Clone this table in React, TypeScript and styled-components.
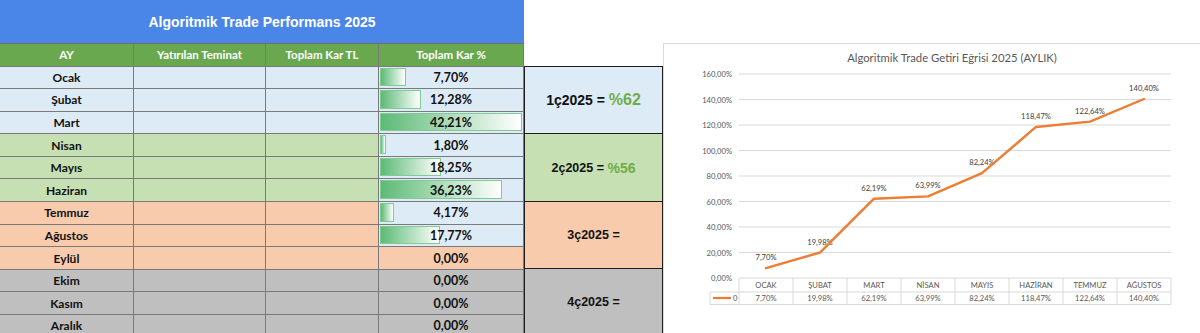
import styled, { createGlobalStyle } from "styled-components";

const GlobalStyle = createGlobalStyle`
  html, body {
    margin: 0;
    padding: 0;
    background: #ffffff;
  }
  body {
    font-family: "Liberation Sans", Arial, sans-serif;
    overflow: hidden;
  }
`;

const ROW_BG = ["#ddebf7", "#c6e0b4", "#f8cbad", "#bfbfbf"];
const BAR_MAX = 42.21;
const BAR_FULL = 142;

const MONTHS = [
  { name: "Ocak", pct: 7.7, q: 0 },
  { name: "Şubat", pct: 12.28, q: 0 },
  { name: "Mart", pct: 42.21, q: 0 },
  { name: "Nisan", pct: 1.8, q: 1 },
  { name: "Mayıs", pct: 18.25, q: 1 },
  { name: "Haziran", pct: 36.23, q: 1 },
  { name: "Temmuz", pct: 4.17, q: 2 },
  { name: "Ağustos", pct: 17.77, q: 2 },
  { name: "Eylül", pct: 0, q: 2 },
  { name: "Ekim", pct: 0, q: 3 },
  { name: "Kasım", pct: 0, q: 3 },
  { name: "Aralık", pct: 0, q: 3 },
];

const QUARTERS = [
  { label: "1ç2025 = ", value: "%62", size: 14, valueSize: 16 },
  { label: "2ç2025 = ", value: "%56", size: 12.5, valueSize: 14 },
  { label: "3ç2025 =", value: "", size: 12.5, valueSize: 14 },
  { label: "4ç2025 =", value: "", size: 12.5, valueSize: 14 },
];

const CHART = [
  { cat: "OCAK", v: 7.7 },
  { cat: "ŞUBAT", v: 19.98 },
  { cat: "MART", v: 62.19 },
  { cat: "NİSAN", v: 63.99 },
  { cat: "MAYIS", v: 82.24 },
  { cat: "HAZİRAN", v: 118.47 },
  { cat: "TEMMUZ", v: 122.64 },
  { cat: "AĞUSTOS", v: 140.4 },
];

const fmt = (n: number) => n.toFixed(2).replace(".", ",") + "%";

const Page = styled.div`
  display: flex;
  align-items: flex-start;
  width: 1200px;
  height: 333px;
  overflow: hidden;
`;

const Sheet = styled.div`
  width: 524px;
  flex-shrink: 0;
`;

const Title = styled.div`
  height: 44px;
  background: #4a86e8;
  color: #ffffff;
  font-family: "Liberation Sans", Arial, sans-serif;
  font-weight: bold;
  font-size: 14px;
  display: flex;
  align-items: center;
  justify-content: center;
  box-sizing: border-box;
  border-bottom: 1px solid #6f6f6f;
`;

const Grid = styled.div`
  display: grid;
  grid-template-columns: 134px 132px 113px 145px;
  grid-template-rows: 22.5px repeat(12, 22.6px);
`;

const Cell = styled.div<{ $bg: string }>`
  box-sizing: border-box;
  background: ${(p) => p.$bg};
  border-right: 1px solid #7a7a7a;
  border-bottom: 1px solid #7a7a7a;
  display: flex;
  align-items: center;
  justify-content: center;
  font-family: Lato, "Liberation Sans", sans-serif;
  font-weight: bold;
  font-size: 12px;
  color: #111;
`;

const HeadCell = styled(Cell)`
  color: #ffffff;
  font-size: 11.5px;
`;

const PctCell = styled(Cell)`
  position: relative;
  font-size: 12.5px;
`;

const Bar = styled.div`
  position: absolute;
  left: 1px;
  top: 1px;
  bottom: 2px;
  box-sizing: border-box;
  border: 1px solid #7fcc95;
  background: linear-gradient(to right, #5dba76, #ffffff);
`;

const PctText = styled.span`
  position: relative;
`;

const QuarterCol = styled.div`
  margin-top: 66px;
  width: 139px;
  flex-shrink: 0;
  border-top: 1px solid #1e1e1e;
`;

const QuarterBox = styled.div<{ $bg: string }>`
  box-sizing: border-box;
  height: 67.4px;
  background: ${(p) => p.$bg};
  border-left: 1px solid #1e1e1e;
  border-right: 1px solid #1e1e1e;
  border-bottom: 1px solid #1e1e1e;
  display: flex;
  align-items: center;
  justify-content: center;
  font-family: "Liberation Sans", Arial, sans-serif;
  font-weight: bold;
  color: #111;
  white-space: pre;
`;

const QLabel = styled.span<{ $size: number }>`
  font-size: ${(p) => p.$size}px;
`;

const QValue = styled.span<{ $size: number }>`
  font-size: ${(p) => p.$size}px;
  color: #70ad47;
`;

const ChartPanel = styled.div`
  margin-top: 43px;
  width: 578px;
  height: 300px;
  flex-shrink: 0;
  box-sizing: border-box;
  border: 1px solid #d9d9d9;
  background: #ffffff;
  display: flex;
  flex-direction: column;
`;

const ChartTitle = styled.div`
  font-family: Lato, "Liberation Sans", sans-serif;
  font-size: 11.3px;
  color: #595959;
  text-align: center;
  line-height: 16px;
  padding-top: 6px;
`;

const ChartSvg = styled.svg`
  display: block;
  font-family: Lato, "Liberation Sans", sans-serif;
`;

const AxisText = styled.text`
  font-size: 7.6px;
  fill: #595959;
`;

const LabelText = styled.text`
  font-size: 7.6px;
  fill: #404040;
`;

// plot geometry, relative to panel inner left / svg top
const X0 = 75;
const COL = 54;
const BASE = 212;
const K = 204 / 160;

function Chart() {
  const ticks = [0, 20, 40, 60, 80, 100, 120, 140, 160];
  const pts = CHART.map((d, i) => ({
    x: X0 + COL / 2 + i * COL,
    y: BASE - d.v * K,
    ...d,
  }));
  const right = X0 + COL * CHART.length;
  return (
    <ChartSvg width={576} height={256}>
      {ticks.map((t) => (
        <g key={t}>
          {t > 0 && (
            <line x1={X0} x2={right} y1={BASE - t * K} y2={BASE - t * K} stroke="#d9d9d9" strokeWidth={1} />
          )}
          <AxisText x={68} y={BASE - t * K} textAnchor="end" dominantBaseline="central">
            {t.toFixed(2).replace(".", ",")}%
          </AxisText>
        </g>
      ))}
      {/* data table under the plot */}
      <line x1={X0} x2={right} y1={BASE} y2={BASE} stroke="#d9d9d9" />
      <line x1={46} x2={right} y1={BASE + 14} y2={BASE + 14} stroke="#d9d9d9" />
      <line x1={46} x2={right} y1={BASE + 26.5} y2={BASE + 26.5} stroke="#d9d9d9" />
      <line x1={46} x2={46} y1={BASE + 14} y2={BASE + 26.5} stroke="#d9d9d9" />
      {Array.from({ length: CHART.length + 1 }).map((_, i) => (
        <line key={i} x1={X0 + i * COL} x2={X0 + i * COL} y1={BASE} y2={BASE + 26.5} stroke="#d9d9d9" />
      ))}
      {pts.map((p) => (
        <g key={p.cat}>
          <AxisText x={p.x} y={BASE + 7} textAnchor="middle" dominantBaseline="central">
            {p.cat}
          </AxisText>
          <AxisText x={p.x} y={BASE + 20} textAnchor="middle" dominantBaseline="central">
            {fmt(p.v)}
          </AxisText>
          <LabelText x={p.x} y={p.y - 11} textAnchor="middle" dominantBaseline="central">
            {fmt(p.v)}
          </LabelText>
        </g>
      ))}
      <line x1={49} x2={67} y1={BASE + 20} y2={BASE + 20} stroke="#ed7d31" strokeWidth={2.25} />
      <AxisText x={69} y={BASE + 20} dominantBaseline="central">
        0
      </AxisText>
      <polyline
        points={pts.map((p) => `${p.x},${p.y}`).join(" ")}
        fill="none"
        stroke="#ed7d31"
        strokeWidth={2.4}
        strokeLinejoin="round"
        strokeLinecap="round"
      />
    </ChartSvg>
  );
}

export default function App() {
  return (
    <>
      <GlobalStyle />
      <Page>
        <Sheet>
          <Title>Algoritmik Trade Performans 2025</Title>
          <Grid>
            <HeadCell $bg="#6aa84f">AY</HeadCell>
            <HeadCell $bg="#6aa84f">Yatırılan Teminat</HeadCell>
            <HeadCell $bg="#6aa84f">Toplam Kar TL</HeadCell>
            <HeadCell $bg="#6aa84f">Toplam Kar %</HeadCell>
            {MONTHS.map((m) => (
              <>
                <Cell key={m.name} $bg={ROW_BG[m.q]}>{m.name}</Cell>
                <Cell $bg={ROW_BG[m.q]} />
                <Cell $bg={ROW_BG[m.q]} />
                <PctCell $bg={m.pct > 0 ? ROW_BG[0] : ROW_BG[m.q]}>
                  {m.pct > 0 && <Bar style={{ width: (m.pct / BAR_MAX) * BAR_FULL }} />}
                  <PctText>{fmt(m.pct)}</PctText>
                </PctCell>
              </>
            ))}
          </Grid>
        </Sheet>
        <QuarterCol>
          {QUARTERS.map((q, i) => (
            <QuarterBox key={q.label} $bg={ROW_BG[i]}>
              <QLabel $size={q.size}>{q.label}</QLabel>
              {q.value && <QValue $size={q.valueSize}>{q.value}</QValue>}
            </QuarterBox>
          ))}
        </QuarterCol>
        <ChartPanel>
          <ChartTitle>Algoritmik Trade Getiri Eğrisi 2025 (AYLIK)</ChartTitle>
          <Chart />
        </ChartPanel>
      </Page>
    </>
  );
}
